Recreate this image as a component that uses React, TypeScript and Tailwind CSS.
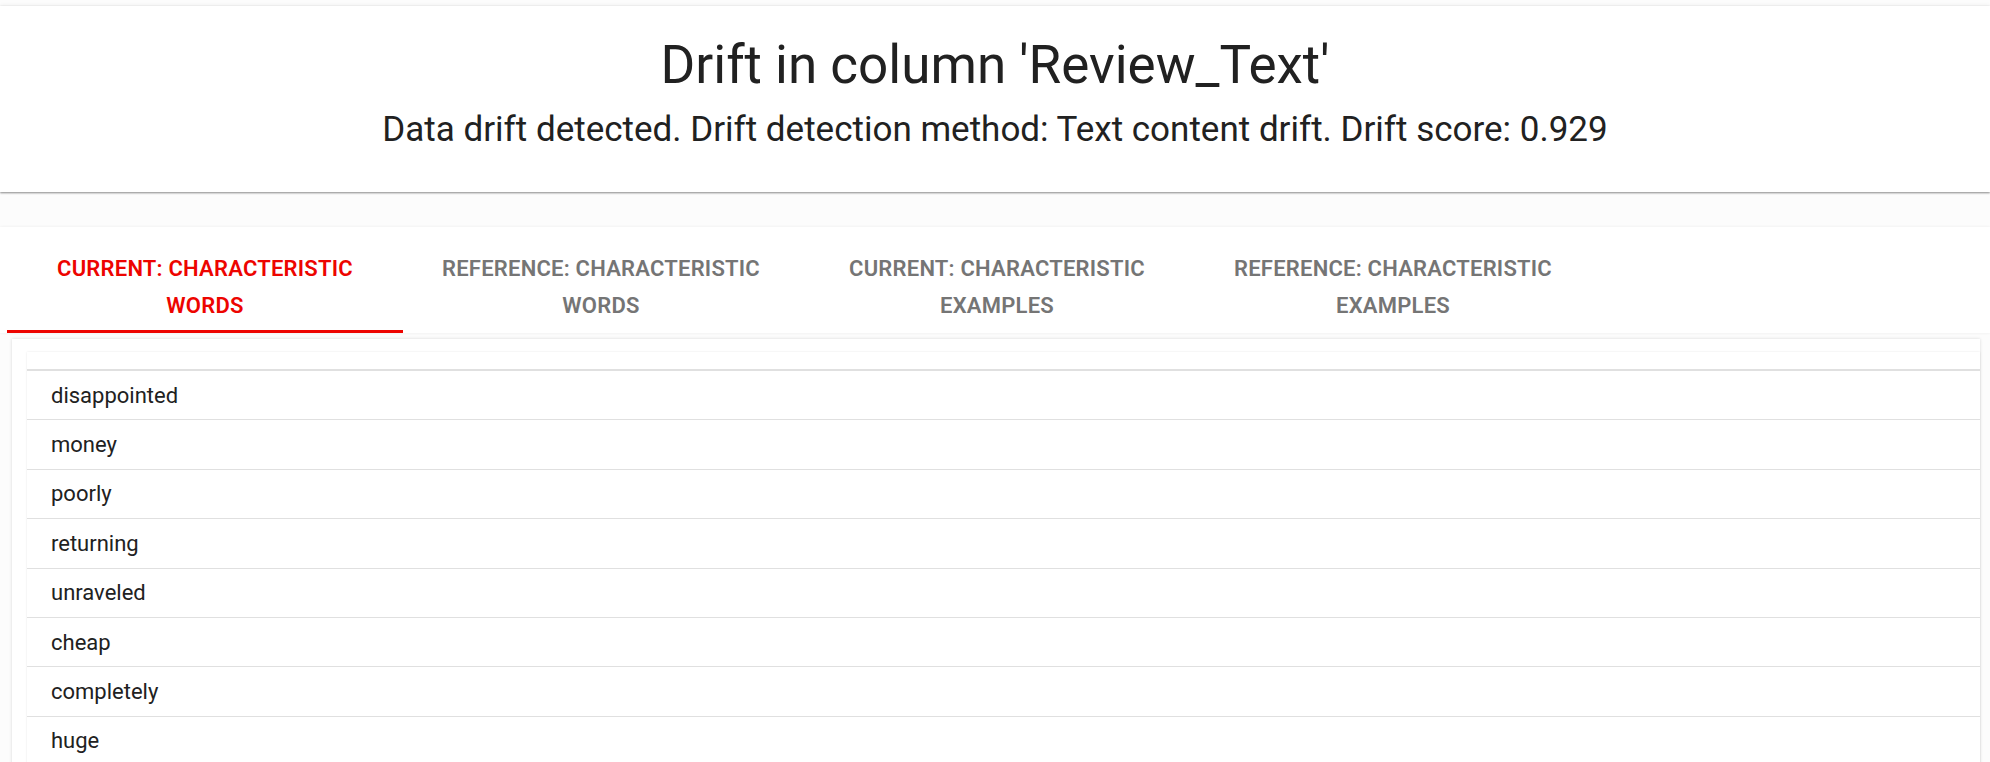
import React, { useState } from 'react';

const tabs = [
  ['CURRENT: CHARACTERISTIC', 'WORDS'],
  ['REFERENCE: CHARACTERISTIC', 'WORDS'],
  ['CURRENT: CHARACTERISTIC', 'EXAMPLES'],
  ['REFERENCE: CHARACTERISTIC', 'EXAMPLES'],
];

const words = [
  'disappointed',
  'money',
  'poorly',
  'returning',
  'unraveled',
  'cheap',
  'completely',
  'huge',
];

const App: React.FC = () => {
  const [active, setActive] = useState(0);

  return (
    <div className="min-h-screen bg-[#fcfcfc] font-['Roboto',sans-serif] text-[#212121] pt-[6px]">
      {/* Header */}
      <div className="bg-white h-[186px] shadow-[0_-1px_4px_rgba(0,0,0,0.05),0_1px_2px_rgba(0,0,0,0.45)] flex flex-col items-center pt-[27px]">
        <h1 className="text-[53px] leading-[64px] font-normal">Drift in column 'Review_Text'</h1>
        <p className="text-[35px] leading-[44px] mt-[11px]">
          Data drift detected. Drift detection method: Text content drift. Drift score: 0.929
        </p>
      </div>

      {/* Tabs */}
      <div className="mt-[35px] bg-white shadow-[0_0_3px_rgba(0,0,0,0.07)] flex pl-[7px]">
        {tabs.map((t, i) => (
          <button
            key={i}
            onClick={() => setActive(i)}
            className={`w-[396px] h-[106px] pt-[23px] flex flex-col items-center border-b-[3px] text-[22px] leading-[37px] font-semibold tracking-[0.01em] ${
              i === active ? 'text-[#ed0400] border-[#ed0400]' : 'text-[#757575] border-transparent'
            }`}
          >
            <span>{t[0]}</span>
            <span>{t[1]}</span>
          </button>
        ))}
      </div>

      {/* Content */}
      <div className="mt-[6px] ml-[12px] mr-[10px] bg-white shadow-[0_0_3px_rgba(0,0,0,0.15)] pl-[15px] pt-[13px]">
        <div className="bg-white shadow-[0_0_2px_rgba(0,0,0,0.1)]">
          <div className="h-[19px] border-b-2 border-[#e0e0e0]" />
          {words.map(w => (
            <div
              key={w}
              className="h-[49.4px] border-b border-[#e0e0e0] flex items-center pl-[24px] text-[22px]"
            >
              {w}
            </div>
          ))}
        </div>
      </div>
    </div>
  );
};

export default App;
